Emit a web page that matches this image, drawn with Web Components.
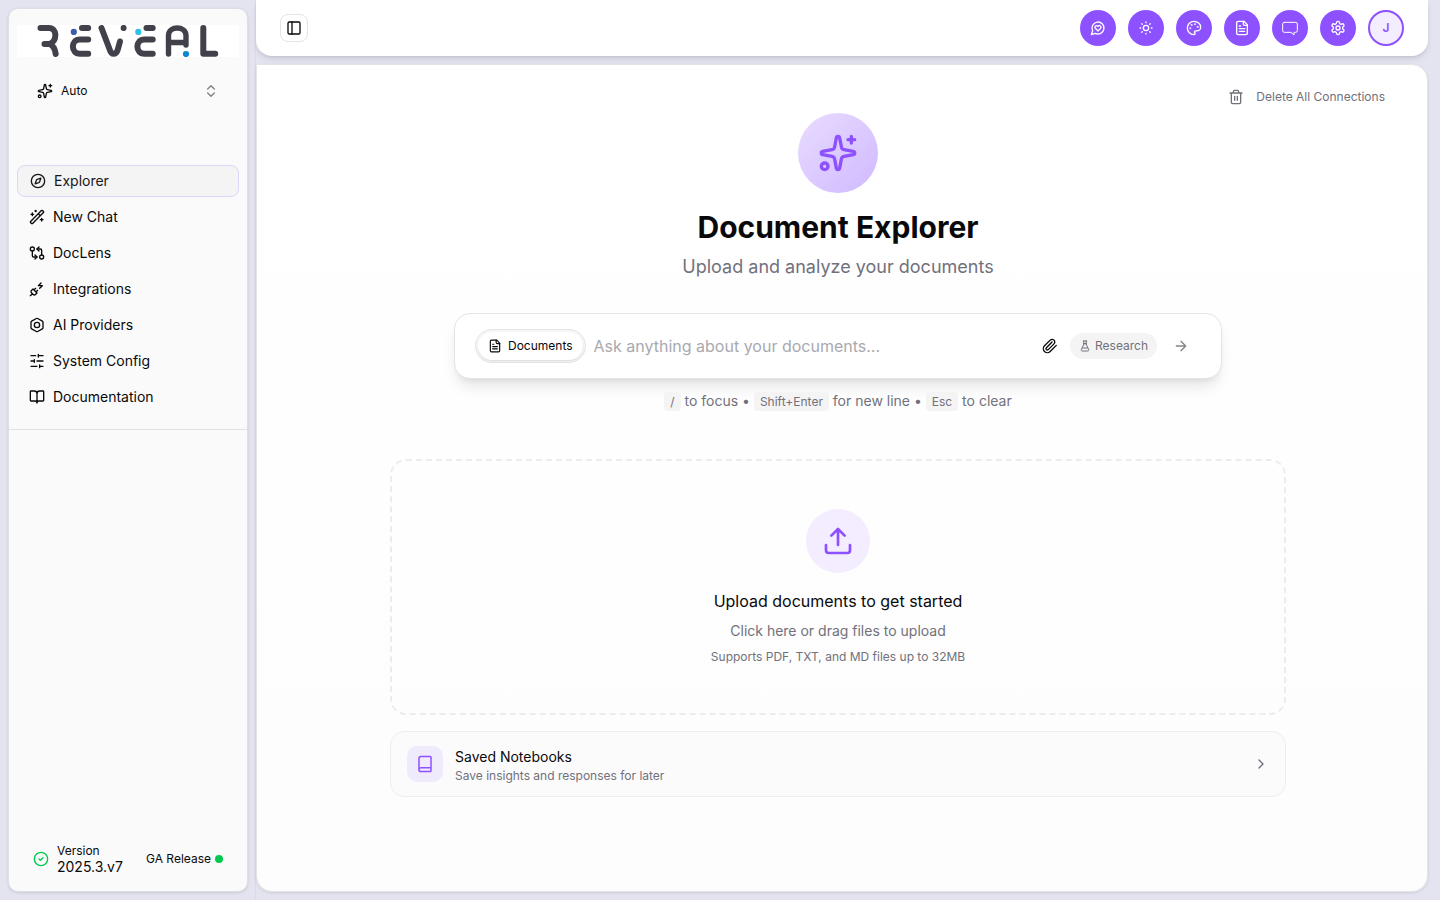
<!DOCTYPE html>
<html lang="en">
<head>
<meta charset="utf-8">
<title>Document Explorer</title>
<style>
    html, body {
        margin: 0;
        height: 100%;
        overflow: hidden;
    }

    body {
        background: #e4e4f1;
        color: #09090b;
        font-family: Inter, "Liberation Sans", sans-serif;
        font-size: 14px;
        line-height: 20px;
    }
</style>
</head>
<body>
<app-shell>
    <app-sidebar slot="sidebar">
        <model-select slot="header">Auto</model-select>
        <nav-item icon="compass" active>Explorer</nav-item>
        <nav-item icon="wand">New Chat</nav-item>
        <nav-item icon="compare">DocLens</nav-item>
        <nav-item icon="plug">Integrations</nav-item>
        <nav-item icon="bolt">AI Providers</nav-item>
        <nav-item icon="sliders">System Config</nav-item>
        <nav-item icon="book-open">Documentation</nav-item>
        <version-info slot="footer" version="2025.3.v7" channel="GA Release"></version-info>
    </app-sidebar>
    <top-bar slot="topbar">
        <round-button icon="message-heart"></round-button>
        <round-button icon="sun"></round-button>
        <round-button icon="palette"></round-button>
        <round-button icon="file"></round-button>
        <round-button icon="bubble"></round-button>
        <round-button icon="gear"></round-button>
        <round-button outline>J</round-button>
    </top-bar>
    <explorer-page>
        <hero-title slot="hero">
            Document Explorer
            <span slot="subtitle">Upload and analyze your documents</span>
        </hero-title>
        <ask-box slot="ask">Ask anything about your documents...</ask-box>
        <key-hints slot="hints"></key-hints>
        <drop-zone>
            Upload documents to get started
            <span slot="action">Click here or drag files to upload</span>
            <span slot="note">Supports PDF, TXT, and MD files up to 32MB</span>
        </drop-zone>
        <notebook-card>
            Saved Notebooks
            <span slot="detail">Save insights and responses for later</span>
        </notebook-card>
    </explorer-page>
</app-shell>

<script>
/**
 * Icon shapes, all on a 24x24 grid and drawn with strokes.
 */
const ICONS = {
    "sparkles": `<path d="M11.017 2.814a1 1 0 0 1 1.966 0l1.051 5.558a2 2 0 0 0 1.594 1.594l5.558 1.051a1 1 0 0 1 0 1.966l-5.558 1.051a2 2 0 0 0-1.594 1.594l-1.051 5.558a1 1 0 0 1-1.966 0l-1.051-5.558a2 2 0 0 0-1.594-1.594l-5.558-1.051a1 1 0 0 1 0-1.966l5.558-1.051a2 2 0 0 0 1.594-1.594z"/><path d="M20 2v4M22 4h-4"/><circle cx="4" cy="20" r="2"/>`,
    "chevrons": `<path d="m7 15 5 5 5-5M7 9l5-5 5 5"/>`,
    "compass": `<path d="m16.24 7.76-1.804 5.411a2 2 0 0 1-1.265 1.265L7.76 16.24l1.804-5.411a2 2 0 0 1 1.265-1.265z"/><circle cx="12" cy="12" r="10"/>`,
    "wand": `<path d="m21.64 3.64-1.28-1.28a1.21 1.21 0 0 0-1.72 0L2.36 18.64a1.21 1.21 0 0 0 0 1.72l1.28 1.28a1.2 1.2 0 0 0 1.72 0L21.64 5.36a1.2 1.2 0 0 0 0-1.72M14 7l3 3M5 6v4M19 14v4M10 2v2M7 8H3M21 16h-4M11 3H9"/>`,
    "compare": `<circle cx="5" cy="6" r="3"/><path d="M12 6h5a2 2 0 0 1 2 2v7"/><path d="m15 9-3-3 3-3"/><circle cx="19" cy="18" r="3"/><path d="M12 18H7a2 2 0 0 1-2-2V9"/><path d="m9 15 3 3-3 3"/>`,
    "plug": `<path d="M6.3 20.3a2.4 2.4 0 0 0 3.4 0L12 18l-6-6-2.3 2.3a2.4 2.4 0 0 0 0 3.4ZM2 22l3-3M7.5 13.5 10 11M10.5 16.5 13 14M18 3l-4 4h6l-4 4"/>`,
    "bolt": `<path d="M21 16V8a2 2 0 0 0-1-1.73l-7-4a2 2 0 0 0-2 0l-7 4A2 2 0 0 0 3 8v8a2 2 0 0 0 1 1.73l7 4a2 2 0 0 0 2 0l7-4A2 2 0 0 0 21 16z"/><circle cx="12" cy="12" r="4"/>`,
    "sliders": `<path d="M21 4h-7M10 4H3M21 12h-9M8 12H3M21 20h-5M12 20H3M14 2v4M8 10v4M16 18v4"/>`,
    "book-open": `<path d="M12 7v14M3 18a1 1 0 0 1-1-1V4a1 1 0 0 1 1-1h5a4 4 0 0 1 4 4 4 4 0 0 1 4-4h5a1 1 0 0 1 1 1v13a1 1 0 0 1-1 1h-6a3 3 0 0 0-3 3 3 3 0 0 0-3-3z"/>`,
    "check": `<circle cx="12" cy="12" r="10"/><path d="m9 12 2 2 4-4"/>`,
    "panel": `<rect width="18" height="18" x="3" y="3" rx="2"/><path d="M9 3v18"/>`,
    "message-heart": `<path d="M7.9 20A9 9 0 1 0 4 16.1L2 22Z"/><path d="M15.8 9.2a2.5 2.5 0 0 0-3.5 0l-.3.4-.35-.3a2.42 2.42 0 1 0-3.2 3.6l3.6 3.5 3.6-3.5c1.2-1.2 1.1-2.7.2-3.7"/>`,
    "sun": `<circle cx="12" cy="12" r="4"/><path d="M12 3v1M12 20v1M3 12h1M20 12h1M18.364 5.636l-.707.707M6.343 17.657l-.707.707M5.636 5.636l.707.707M17.657 17.657l.707.707"/>`,
    "palette": `<circle cx="13.5" cy="6.5" r=".5"/><circle cx="17.5" cy="10.5" r=".5"/><circle cx="8.5" cy="7.5" r=".5"/><circle cx="6.5" cy="12.5" r=".5"/><path d="M12 2C6.5 2 2 6.5 2 12s4.5 10 10 10c.926 0 1.648-.746 1.648-1.688 0-.437-.18-.835-.437-1.125-.29-.289-.438-.652-.438-1.125a1.64 1.64 0 0 1 1.668-1.668h1.996c3.051 0 5.555-2.503 5.555-5.554C21.965 6.012 17.461 2 12 2z"/>`,
    "file": `<path d="M15 2H6a2 2 0 0 0-2 2v16a2 2 0 0 0 2 2h12a2 2 0 0 0 2-2V7Z"/><path d="M14 2v4a2 2 0 0 0 2 2h4M10 9H8M16 13H8M16 17H8"/>`,
    "bubble": `<path d="M3.5 3.5h17a2.5 2.5 0 0 1 2.5 2.5v10a2.5 2.5 0 0 1-2.5 2.5H18v4l-4.5-4h-10A2.5 2.5 0 0 1 1 16V6a2.5 2.5 0 0 1 2.5-2.5z"/>`,
    "gear": `<path d="M12.22 2h-.44a2 2 0 0 0-2 2v.18a2 2 0 0 1-1 1.73l-.43.25a2 2 0 0 1-2 0l-.15-.08a2 2 0 0 0-2.73.73l-.22.38a2 2 0 0 0 .73 2.73l.15.1a2 2 0 0 1 1 1.72v.51a2 2 0 0 1-1 1.74l-.15.09a2 2 0 0 0-.73 2.73l.22.38a2 2 0 0 0 2.73.73l.15-.08a2 2 0 0 1 2 0l.43.25a2 2 0 0 1 1 1.73V20a2 2 0 0 0 2 2h.44a2 2 0 0 0 2-2v-.18a2 2 0 0 1 1-1.73l.43-.25a2 2 0 0 1 2 0l.15.08a2 2 0 0 0 2.73-.73l.22-.39a2 2 0 0 0-.73-2.73l-.15-.08a2 2 0 0 1-1-1.74v-.5a2 2 0 0 1 1-1.74l.15-.09a2 2 0 0 0 .73-2.73l-.22-.38a2 2 0 0 0-2.73-.73l-.15.08a2 2 0 0 1-2 0l-.43-.25a2 2 0 0 1-1-1.73V4a2 2 0 0 0-2-2z"/><circle cx="12" cy="12" r="3"/>`,
    "trash": `<path d="M3 6h18M19 6v14a2 2 0 0 1-2 2H7a2 2 0 0 1-2-2V6M8 6V4a2 2 0 0 1 2-2h4a2 2 0 0 1 2 2v2M10 11v6M14 11v6"/>`,
    "clip": `<path d="m21.44 11.05-9.19 9.19a6 6 0 0 1-8.49-8.49l8.57-8.57A4 4 0 1 1 18 8.84l-8.59 8.57a2 2 0 0 1-2.83-2.83l8.49-8.48"/>`,
    "flask": `<path d="M8.5 2h7M9.5 2v7M14.5 2v7M9.5 9 4.6 19a2.05 2.05 0 0 0 1.9 3h11a2.05 2.05 0 0 0 1.9-3L14.5 9M9.5 7h5M7 16h10"/>`,
    "arrow": `<path d="M5 12h14M12 5l7 7-7 7"/>`,
    "upload": `<path d="M21 15v4a2 2 0 0 1-2 2H5a2 2 0 0 1-2-2v-4M17 8l-5-5-5 5M12 3v12"/>`,
    "book": `<path d="M4 19.5v-15A2.5 2.5 0 0 1 6.5 2H19a1 1 0 0 1 1 1v18a1 1 0 0 1-1 1H6.5a1 1 0 0 1 0-5H20"/>`,
    "chevron-right": `<path d="m9 18 6-6-6-6"/>`
};

/**
 * Shared base: clones the class's template into an open shadow root.
 */
class BaseElement extends HTMLElement {
    constructor() {
        super();

        const template = document.createElement("template");
        template.innerHTML = this.constructor.markup;

        this.attachShadow({mode: "open"});
        this.shadowRoot.appendChild(template.content.cloneNode(true));
    }
}

/**
 * <ui-icon name="..."> takes its box from --size and its line from --stroke.
 */
class UiIcon extends BaseElement {
    static get markup() {
        return `
            <style>
                :host {
                    display: block;
                    flex: none;
                    width: var(--size, 16px);
                    height: var(--size, 16px);
                }

                svg {
                    display: block;
                    width: 100%;
                    height: 100%;
                    fill: none;
                    stroke: currentColor;
                    stroke-width: var(--stroke, 2);
                    stroke-linecap: round;
                    stroke-linejoin: round;
                    overflow: visible;
                }
            </style>
            <svg viewBox="0 0 24 24"></svg>
        `;
    }

    static get observedAttributes() {
        return ["name"];
    }

    attributeChangedCallback(name, oldValue, newValue) {
        this.shadowRoot.querySelector("svg").innerHTML = ICONS[newValue] || "";
    }
}

class AppShell extends BaseElement {
    static get markup() {
        return `
            <style>
                :host {
                    display: grid;
                    grid-template-columns: 256px 1fr;
                    height: 100vh;
                }

                .side {
                    box-sizing: border-box;
                    padding: 8px;
                    height: 100vh;
                }

                .content {
                    box-sizing: border-box;
                    display: flex;
                    flex-direction: column;
                    gap: 8px;
                    height: 100vh;
                    padding: 0 12px 8px 0;
                    box-shadow: 0 0 2px rgba(0, 0, 0, .12);
                }
            </style>
            <div class="side"><slot name="sidebar"></slot></div>
            <div class="content"><slot name="topbar"></slot><slot></slot></div>
        `;
    }
}

class AppSidebar extends BaseElement {
    static get markup() {
        return `
            <style>
                :host {
                    box-sizing: border-box;
                    display: flex;
                    flex-direction: column;
                    height: 100%;
                    border: 1px solid #dedee6;
                    border-radius: 10px;
                    background: #fafafa;
                    box-shadow: 0 1px 3px rgba(0, 0, 0, .12);
                }

                nav {
                    display: flex;
                    flex-direction: column;
                    gap: 4px;
                    padding: 58px 8px 16px;
                    border-bottom: 1px solid #e2e2e5;
                }

                .footer {
                    margin-top: auto;
                    padding: 0 24px 16px;
                }
            </style>
            <brand-logo></brand-logo>
            <slot name="header"></slot>
            <nav><slot></slot></nav>
            <div class="footer"><slot name="footer"></slot></div>
        `;
    }
}

class BrandLogo extends BaseElement {
    static get markup() {
        return `
            <style>
                :host {
                    display: flex;
                    margin: 16px 8px 0;
                    height: 32px;
                    background: #fff;
                }

                svg {
                    fill: none;
                    stroke: #41414b;
                    stroke-width: 6;
                    stroke-linecap: round;
                    stroke-linejoin: round;
                }

                circle {
                    stroke: none;
                }
            </style>
            <svg width="222" height="32" viewBox="17 25 222 32">
                <path d="M40.5 28H49c8 0 8.500 12 1 16H44.500h5c4 1.500 5.500 5 6.200 10"/>
                <path d="M82 28h6.200M88.200 39.400H80c-9.500 0-9.500 14.400 0 14.400h8.200"/>
                <path d="M101.500 28l8.200 21.500c1.600 5.800 6.300 5.800 8.100 0L120 41.500"/>
                <path d="M146.500 28h6.200M152.700 39.400h-8.200c-9.500 0-9.500 14.400 0 14.400h8.200"/>
                <path d="M168.500 54V35.500c0-10 17.500-10 17.500 0V45M168.500 42.500H186" stroke-width="5.400"/>
                <path d="M203.300 28v25.800h11.900"/>
                <circle cx="73.800" cy="31.900" r="3.100" fill="#3d5cae"/>
                <circle cx="123.600" cy="27.900" r="3" fill="#41414b"/>
                <circle cx="138.300" cy="31.900" r="3.100" fill="#2fc0ea"/>
                <circle cx="186" cy="54" r="3.100" fill="#0886d0"/>
            </svg>
        `;
    }
}

class ModelSelect extends BaseElement {
    static get markup() {
        return `
            <style>
                :host {
                    display: flex;
                    align-items: center;
                    gap: 8px;
                    height: 32px;
                    margin: 18px 28px 0;
                    font-size: 12px;
                    line-height: 16px;
                }

                ui-icon:last-child {
                    margin-left: auto;
                    color: #808086;
                }
            </style>
            <ui-icon name="sparkles"></ui-icon>
            <slot></slot>
            <ui-icon name="chevrons"></ui-icon>
        `;
    }
}

class NavItem extends BaseElement {
    static get markup() {
        return `
            <style>
                :host {
                    box-sizing: border-box;
                    display: flex;
                    align-items: center;
                    gap: 8px;
                    height: 32px;
                    padding: 0 12px;
                    border-radius: 8px;
                }

                :host([active]) {
                    border: 1px solid #ddd6fb;
                    background: #f4f4f5;
                    color: #18181b;
                }
            </style>
            <ui-icon></ui-icon>
            <slot></slot>
        `;
    }

    connectedCallback() {
        this.shadowRoot.querySelector("ui-icon").setAttribute("name", this.getAttribute("icon"));
    }
}

class VersionInfo extends BaseElement {
    static get markup() {
        return `
            <style>
                :host {
                    display: flex;
                    align-items: center;
                    gap: 8px;
                    font-size: 12px;
                    line-height: 16px;
                }

                ui-icon {
                    color: #00c950;
                }

                .version {
                    font-size: 14px;
                }

                .channel {
                    display: flex;
                    align-items: center;
                    gap: 4px;
                    margin-left: auto;
                }

                i {
                    width: 8px;
                    height: 8px;
                    border-radius: 50%;
                    background: #00c950;
                }
            </style>
            <ui-icon name="check"></ui-icon>
            <div>
                <div>Version</div>
                <div class="version"></div>
            </div>
            <div class="channel"><span></span><i></i></div>
        `;
    }

    connectedCallback() {
        this.shadowRoot.querySelector(".version").textContent = this.getAttribute("version");
        this.shadowRoot.querySelector(".channel span").textContent = this.getAttribute("channel");
    }
}

class TopBar extends BaseElement {
    static get markup() {
        return `
            <style>
                :host {
                    box-sizing: border-box;
                    display: flex;
                    align-items: center;
                    flex: none;
                    gap: 12px;
                    height: 56px;
                    padding: 0 24px;
                    border-radius: 0 0 16px 16px;
                    background: #fff;
                    box-shadow: 0 4px 6px -1px rgba(0, 0, 0, .1), 0 2px 4px -2px rgba(0, 0, 0, .1);
                }

                .toggle {
                    box-sizing: border-box;
                    display: grid;
                    place-items: center;
                    width: 28px;
                    height: 28px;
                    margin-right: auto;
                    border: 1px solid #e4e4e7;
                    border-radius: 8px;
                }
            </style>
            <div class="toggle"><ui-icon name="panel"></ui-icon></div>
            <slot></slot>
        `;
    }
}

class RoundButton extends BaseElement {
    static get markup() {
        return `
            <style>
                :host {
                    box-sizing: border-box;
                    display: grid;
                    place-items: center;
                    width: 36px;
                    height: 36px;
                    border-radius: 50%;
                    background: #8e51ff;
                    color: #fff;
                    font-size: 12px;
                    font-weight: 600;
                    line-height: 16px;
                    --stroke: 2;
                }

                :host([icon="bubble"]) {
                    --stroke: 1.5;
                }

                :host([outline]) {
                    border: 2px solid #8e51ff;
                    background: #f3edff;
                    color: #8e51ff;
                }
            </style>
            <slot></slot>
        `;
    }

    connectedCallback() {
        if(this.hasAttribute("icon")) {
            const icon = document.createElement("ui-icon");

            icon.setAttribute("name", this.getAttribute("icon"));
            this.shadowRoot.querySelector("slot").replaceWith(icon);
        }
    }
}

class ExplorerPage extends BaseElement {
    static get markup() {
        return `
            <style>
                /* the right padding keeps the scrollbar's gutter free */
                :host {
                    box-sizing: border-box;
                    display: flex;
                    flex-direction: column;
                    align-items: center;
                    flex: 1;
                    padding-right: 8px;
                    border: 1px solid #e4e4e7;
                    border-radius: 0 16px 16px 16px;
                    background: linear-gradient(#fff, #fdfdfd);
                    box-shadow: 0 1px 3px rgba(0, 0, 0, .1);
                }

                .actions {
                    display: flex;
                    align-items: center;
                    align-self: flex-end;
                    gap: 12px;
                    height: 32px;
                    margin: 16px 34px 0 0;
                    color: #71717b;
                    font-size: 12px;
                    line-height: 16px;
                }

                .column {
                    display: flex;
                    flex-direction: column;
                    gap: 16px;
                    width: 896px;
                    margin-top: 47px;
                }
            </style>
            <div class="actions">
                <ui-icon name="trash"></ui-icon>
                <span>Delete All Connections</span>
            </div>
            <slot name="hero"></slot>
            <slot name="ask"></slot>
            <slot name="hints"></slot>
            <div class="column"><slot></slot></div>
        `;
    }
}

class HeroTitle extends BaseElement {
    static get markup() {
        return `
            <style>
                :host {
                    display: flex;
                    flex-direction: column;
                    align-items: center;
                    text-align: center;
                }

                .badge {
                    display: grid;
                    place-items: center;
                    width: 80px;
                    height: 80px;
                    border-radius: 50%;
                    background: linear-gradient(135deg, #e8dcff, #d0b9ff);
                    color: #8e51ff;
                    --size: 40px;
                }

                h1 {
                    margin: 16px 0 0;
                    font-size: 30px;
                    font-weight: 700;
                    line-height: 36px;
                }

                p {
                    margin: 8px 0 0;
                    color: #71717b;
                    font-size: 18px;
                    line-height: 28px;
                }
            </style>
            <div class="badge"><ui-icon name="sparkles"></ui-icon></div>
            <h1><slot></slot></h1>
            <p><slot name="subtitle"></slot></p>
        `;
    }
}

class AskBox extends BaseElement {
    static get markup() {
        return `
            <style>
                :host {
                    box-sizing: border-box;
                    display: flex;
                    align-items: center;
                    width: 768px;
                    height: 66px;
                    margin-top: 32px;
                    padding: 0 32px 0 20px;
                    border: 1px solid #e4e4e7;
                    border-radius: 16px;
                    background: #fff;
                    box-shadow: 0 10px 15px -3px rgba(0, 0, 0, .1), 0 4px 6px -4px rgba(0, 0, 0, .1);
                    font-size: 12px;
                    line-height: 16px;
                }

                .ring {
                    padding: 2px;
                    border: 1px solid #e4e4e7;
                    border-radius: 17px;
                    background: #f7f7f8;
                }

                .source {
                    display: flex;
                    align-items: center;
                    gap: 6px;
                    height: 28px;
                    padding: 0 10px;
                    border-radius: 14px;
                    background: #fff;
                    box-shadow: 0 1px 2px rgba(0, 0, 0, .12);
                    --size: 14px;
                }

                .prompt {
                    flex: 1;
                    margin-left: 8px;
                    color: #a9a9af;
                    font-size: 16px;
                    line-height: 24px;
                }

                .mode {
                    display: flex;
                    align-items: center;
                    gap: 4px;
                    height: 26px;
                    margin: 0 16px 0 12px;
                    padding: 0 9px;
                    border-radius: 13px;
                    background: #f4f4f5;
                    color: #71717b;
                    --size: 12px;
                }

                .send {
                    color: #848484;
                }
            </style>
            <div class="ring">
                <div class="source"><ui-icon name="file"></ui-icon><span>Documents</span></div>
            </div>
            <div class="prompt"><slot></slot></div>
            <ui-icon name="clip"></ui-icon>
            <div class="mode"><ui-icon name="flask"></ui-icon><span>Research</span></div>
            <ui-icon class="send" name="arrow"></ui-icon>
        `;
    }
}

class KeyHints extends BaseElement {
    static get markup() {
        return `
            <style>
                :host {
                    display: block;
                    margin-top: 12px;
                    color: #71717b;
                }

                kbd {
                    padding: 2px 6px;
                    border-radius: 4px;
                    background: #f4f4f5;
                    font-family: inherit;
                    font-size: 12px;
                }
            </style>
            <kbd>/</kbd> to focus • <kbd>Shift+Enter</kbd> for new line • <kbd>Esc</kbd> to clear
        `;
    }
}

class DropZone extends BaseElement {
    static get markup() {
        return `
            <style>
                :host {
                    box-sizing: border-box;
                    display: flex;
                    flex-direction: column;
                    align-items: center;
                    height: 256px;
                    padding-top: 48px;
                    border: 2px dashed #ececee;
                    border-radius: 16px;
                    text-align: center;
                }

                .badge {
                    display: grid;
                    place-items: center;
                    width: 64px;
                    height: 64px;
                    border-radius: 50%;
                    background: #f3edff;
                    color: #8e51ff;
                    --size: 32px;
                }

                .title {
                    margin-top: 16px;
                    font-size: 16px;
                    line-height: 24px;
                }

                .action {
                    margin-top: 8px;
                    color: #71717b;
                }

                .note {
                    margin-top: 8px;
                    color: #71717b;
                    font-size: 12px;
                    line-height: 16px;
                }
            </style>
            <div class="badge"><ui-icon name="upload"></ui-icon></div>
            <div class="title"><slot></slot></div>
            <div class="action"><slot name="action"></slot></div>
            <div class="note"><slot name="note"></slot></div>
        `;
    }
}

class NotebookCard extends BaseElement {
    static get markup() {
        return `
            <style>
                :host {
                    box-sizing: border-box;
                    display: flex;
                    align-items: center;
                    gap: 12px;
                    height: 66px;
                    padding: 0 16px;
                    border: 1px solid #eeeef0;
                    border-radius: 14px;
                    background: #fbfbfb;
                }

                .badge {
                    display: grid;
                    place-items: center;
                    width: 36px;
                    height: 36px;
                    border-radius: 10px;
                    background: #f0eafd;
                    color: #8e51ff;
                    --size: 18px;
                }

                .text {
                    padding-top: 3px;
                }

                .detail {
                    margin-top: 1px;
                    color: #71717b;
                    font-size: 12px;
                    line-height: 16px;
                }

                .more {
                    margin-left: auto;
                    color: #71717b;
                }
            </style>
            <div class="badge"><ui-icon name="book"></ui-icon></div>
            <div class="text">
                <div><slot></slot></div>
                <div class="detail"><slot name="detail"></slot></div>
            </div>
            <ui-icon class="more" name="chevron-right"></ui-icon>
        `;
    }
}

customElements.define("ui-icon", UiIcon);
customElements.define("app-shell", AppShell);
customElements.define("app-sidebar", AppSidebar);
customElements.define("brand-logo", BrandLogo);
customElements.define("model-select", ModelSelect);
customElements.define("nav-item", NavItem);
customElements.define("version-info", VersionInfo);
customElements.define("top-bar", TopBar);
customElements.define("round-button", RoundButton);
customElements.define("explorer-page", ExplorerPage);
customElements.define("hero-title", HeroTitle);
customElements.define("ask-box", AskBox);
customElements.define("key-hints", KeyHints);
customElements.define("drop-zone", DropZone);
customElements.define("notebook-card", NotebookCard);
</script>
</body>
</html>
